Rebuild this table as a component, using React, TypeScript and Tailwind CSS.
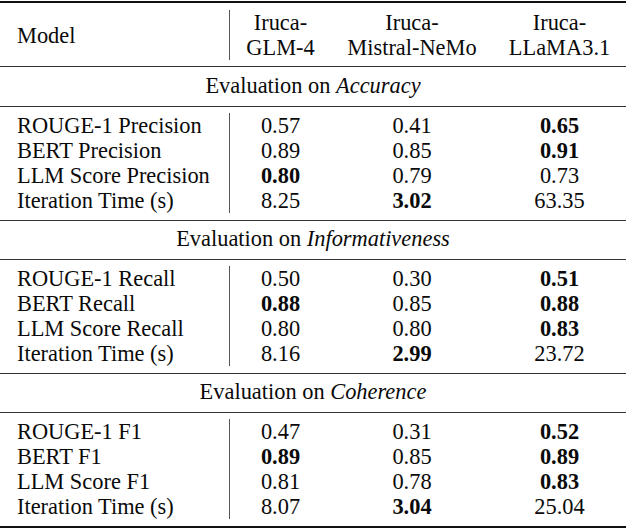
import React from "react";

interface Row {
  label: string;
  values: [string, string, string];
  bold: [boolean, boolean, boolean];
}

interface Section {
  title: string;
  metric: string;
  rows: Row[];
}

const sections: Section[] = [
  {
    title: "Evaluation on",
    metric: "Accuracy",
    rows: [
      { label: "ROUGE-1 Precision", values: ["0.57", "0.41", "0.65"], bold: [false, false, true] },
      { label: "BERT Precision", values: ["0.89", "0.85", "0.91"], bold: [false, false, true] },
      { label: "LLM Score Precision", values: ["0.80", "0.79", "0.73"], bold: [true, false, false] },
      { label: "Iteration Time (s)", values: ["8.25", "3.02", "63.35"], bold: [false, true, false] },
    ],
  },
  {
    title: "Evaluation on",
    metric: "Informativeness",
    rows: [
      { label: "ROUGE-1 Recall", values: ["0.50", "0.30", "0.51"], bold: [false, false, true] },
      { label: "BERT Recall", values: ["0.88", "0.85", "0.88"], bold: [true, false, true] },
      { label: "LLM Score Recall", values: ["0.80", "0.80", "0.83"], bold: [false, false, true] },
      { label: "Iteration Time (s)", values: ["8.16", "2.99", "23.72"], bold: [false, true, false] },
    ],
  },
  {
    title: "Evaluation on",
    metric: "Coherence",
    rows: [
      { label: "ROUGE-1 F1", values: ["0.47", "0.31", "0.52"], bold: [false, false, true] },
      { label: "BERT F1", values: ["0.89", "0.85", "0.89"], bold: [true, false, true] },
      { label: "LLM Score F1", values: ["0.81", "0.78", "0.83"], bold: [false, false, true] },
      { label: "Iteration Time (s)", values: ["8.07", "3.04", "25.04"], bold: [false, true, false] },
    ],
  },
];

// same column widths everywhere so the rule under col 1 lines up
const grid = "grid grid-cols-[229px_102px_162px_133px]";

const Rule = ({ thick }: { thick?: boolean }) => (
  <div className={thick ? "h-[2px] bg-[#111]" : "h-px bg-[#333]"} />
);

const DataBlock = ({ rows }: { rows: Row[] }) => (
  <div className={`${grid} pt-[6px] pb-[7px]`}>
    <div className="flex flex-col">
      {rows.map((r) => (
        <div key={r.label} className="h-[25px] pl-[17px] leading-[25px] whitespace-nowrap">
          {r.label}
        </div>
      ))}
    </div>
    {[0, 1, 2].map((col) => (
      <div key={col} className={`flex flex-col ${col === 0 ? "border-l border-[#555]" : ""}`}>
        {rows.map((r) => (
          <div
            key={r.label}
            className={`h-[25px] text-center leading-[25px] ${r.bold[col] ? "font-bold" : ""}`}
          >
            {r.values[col]}
          </div>
        ))}
      </div>
    ))}
  </div>
);

export default function App() {
  return (
    <div className="w-[626px] h-[530px] bg-white pt-px text-[22.4px] text-[#0a0a0a] font-[family-name:Liberation_Serif,serif]">
      <Rule thick />
      <div className={`${grid} pt-[7px] pb-[6px] leading-[25px]`}>
        <div className="flex items-center pl-[17px]">Model</div>
        <div className="flex flex-col items-center border-l border-[#555]">
          <span>Iruca-</span>
          <span>GLM-4</span>
        </div>
        <div className="flex flex-col items-center whitespace-nowrap">
          <span>Iruca-</span>
          <span>Mistral-NeMo</span>
        </div>
        <div className="flex flex-col items-center">
          <span>Iruca-</span>
          <span>LLaMA3.1</span>
        </div>
      </div>
      <Rule />
      {sections.map((s, i) => (
        <div key={s.metric}>
          <div
            className={`${i === 0 ? "h-[39px]" : "h-[38px]"} flex items-center justify-center pb-[2px]`}
          >
            {s.title}&nbsp;<i>{s.metric}</i>
          </div>
          <Rule />
          <DataBlock rows={s.rows} />
          {i < sections.length - 1 ? <Rule /> : <Rule thick />}
        </div>
      ))}
    </div>
  );
}
